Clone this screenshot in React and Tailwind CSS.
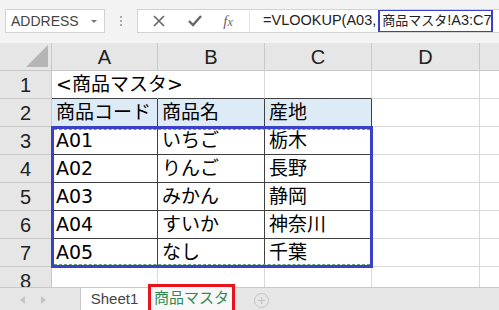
import React from "react";

const cols = [
  { key: "A", w: "w-[106px]" },
  { key: "B", w: "w-[107px]" },
  { key: "C", w: "w-[107px]" },
  { key: "D", w: "w-[108px]" },
  { key: "E", w: "w-[60px]" },
];

const rows = [
  ["<商品マスタ>", "", ""],
  ["商品コード", "商品名", "産地"],
  ["A01", "いちご", "栃木"],
  ["A02", "りんご", "長野"],
  ["A03", "みかん", "静岡"],
  ["A04", "すいか", "神奈川"],
  ["A05", "なし", "千葉"],
  ["", "", ""],
];

const cellFont = {
  fontFamily: '"DejaVu Sans", "Noto Sans CJK JP", sans-serif',
};

function Cell({ r, c, text }) {
  const inTable = r >= 2 && r <= 7 && c <= 2;
  let cls = "border-r border-b border-[#d9d9d9]";
  if (inTable) cls = "border-r border-b border-[#404040]";
  else if (r === 1 && c === 0) cls = "border-r border-b border-r-transparent border-b-[#404040]";
  else if (r === 1 && c <= 2) cls = "border-r border-b border-r-[#d9d9d9] border-b-[#404040]";
  let bg = "bg-white";
  if (r === 2 && c <= 2) bg = "bg-[#ddebf7]";
  if (r === 1) bg = "bg-transparent";
  return (
    <div
      className={`${cols[c].w} h-[28px] shrink-0 ${cls} ${bg} flex items-center px-[4px] text-[19px] text-black leading-none whitespace-nowrap overflow-visible`}
      style={cellFont}
    >
      {text}
    </div>
  );
}

export default function App() {
  return (
    <div
      className="w-[499px] h-[310px] overflow-hidden bg-white flex flex-col"
      style={{ fontFamily: '"Liberation Sans", "Noto Sans CJK JP", sans-serif' }}
    >
      {/* formula bar */}
      <div className="h-[43px] shrink-0 bg-[#f3f3f3] flex items-start pt-[9px] pl-[5px]">
        <div className="w-[100px] h-[24px] shrink-0 bg-white border border-[#d2d2d2] flex items-center justify-between pl-[5px] pr-[6px]">
          <span className="text-[14px] text-[#444]">ADDRESS</span>
          <svg width="8" height="5" viewBox="0 0 8 5">
            <path d="M1 1 L4 4 L7 1 Z" fill="#777" />
          </svg>
        </div>
        <div className="w-[32px] h-[24px] shrink-0 flex flex-col items-center justify-center gap-[2px]">
          <span className="w-[2px] h-[2px] bg-[#aaa]" />
          <span className="w-[2px] h-[2px] bg-[#aaa]" />
          <span className="w-[2px] h-[2px] bg-[#aaa]" />
        </div>
        <div className="flex-1 min-w-0 overflow-hidden h-[24px] bg-white border border-r-0 border-[#d2d2d2] flex items-center">
          <div className="w-[112px] shrink-0 h-full flex items-center justify-around pl-[4px] pr-[6px] border-r border-[#e6e6e6]">
            <svg width="14" height="14" viewBox="0 0 14 14">
              <path d="M2 2 L12 12 M12 2 L2 12" stroke="#666" strokeWidth="1.6" />
            </svg>
            <svg width="16" height="14" viewBox="0 0 16 14">
              <path d="M2 7 L6 11 L14 2" stroke="#666" strokeWidth="2.4" fill="none" />
            </svg>
            <span className="text-[15px] italic text-[#666]" style={{ fontFamily: '"Liberation Serif", serif' }}>
              f<span className="text-[12px]">x</span>
            </span>
          </div>
          <span className="ml-[13px] shrink-0 text-[14.5px] text-[#222] whitespace-nowrap">=VLOOKUP(A03,</span>
          <span className="ml-[2px] shrink-0 w-[115px] h-[24px] border-[2px] border-[#3b40c8] flex items-center pl-[2px] text-[#222] whitespace-nowrap">
            <span className="text-[13px]">商品マスタ</span>
            <span className="text-[14.5px]">!A3:C7</span>
          </span>
        </div>
      </div>

      {/* sheet */}
      <div className="relative h-[244px] shrink-0 overflow-hidden">
        <div className="flex">
          <div className="w-[52px] h-[28px] shrink-0 bg-[#e6e6e6] border-r border-b border-[#c8c8c8] flex items-end justify-end p-[3px]">
            <svg width="22" height="22" viewBox="0 0 22 22">
              <path d="M22 0 L22 22 L0 22 Z" fill="#b5b5b5" />
            </svg>
          </div>
          {cols.map((col) => (
            <div
              key={col.key}
              className={`${col.w} h-[28px] shrink-0 bg-[#e6e6e6] border-r border-b border-[#c8c8c8] flex items-center justify-center text-[20px] text-[#222]`}
            >
              {col.key}
            </div>
          ))}
        </div>
        {rows.map((row, ri) => (
          <div key={ri} className="flex bg-white">
            <div className="w-[52px] h-[28px] shrink-0 bg-[#e6e6e6] border-r border-b border-[#c8c8c8] flex items-center justify-center text-[20px] text-[#222]">
              {ri + 1}
            </div>
            {cols.map((col, ci) => (
              <Cell key={col.key} r={ri + 1} c={ci} text={row[ci] || ""} />
            ))}
          </div>
        ))}

        {/* copy / selection marquee */}
        <div className="absolute left-[51px] top-[83px] w-[322px] h-[142px] border-[3px] border-[#3b40c8] pointer-events-none">
          <div className="w-full h-full border-y border-dashed border-[#5f9f73]" />
        </div>
      </div>

      {/* sheet tabs */}
      <div className="relative flex-1 bg-[#e6e6e6] border-t border-[#c8c8c8] flex items-stretch">
        <div className="w-[80px] flex items-center gap-[14px] pl-[20px]">
          <svg width="6" height="8" viewBox="0 0 6 8">
            <path d="M5 0 L0 4 L5 8 Z" fill="#c4c4c4" />
          </svg>
          <svg width="6" height="8" viewBox="0 0 6 8">
            <path d="M1 0 L6 4 L1 8 Z" fill="#c4c4c4" />
          </svg>
        </div>
        <div className="w-[68px] bg-white border-l border-[#c8c8c8] border-b-2 border-b-[#3c8a57] flex items-center justify-center text-[15px] text-[#444]">
          Sheet1
        </div>
        <div className="w-[87px] -mt-[4px] bg-[#f8f8f8] border-[3px] border-[#e8141c] flex items-center justify-center text-[15px] text-[#2f8a52]">
          商品マスタ
        </div>
        <div className="ml-[19px] flex items-center">
          <div className="w-[15px] h-[15px] rounded-full border border-[#c4c4c4] flex items-center justify-center">
            <svg width="9" height="9" viewBox="0 0 9 9">
              <path d="M4.5 1 V8 M1 4.5 H8" stroke="#c4c4c4" strokeWidth="1.2" />
            </svg>
          </div>
        </div>
      </div>
    </div>
  );
}
